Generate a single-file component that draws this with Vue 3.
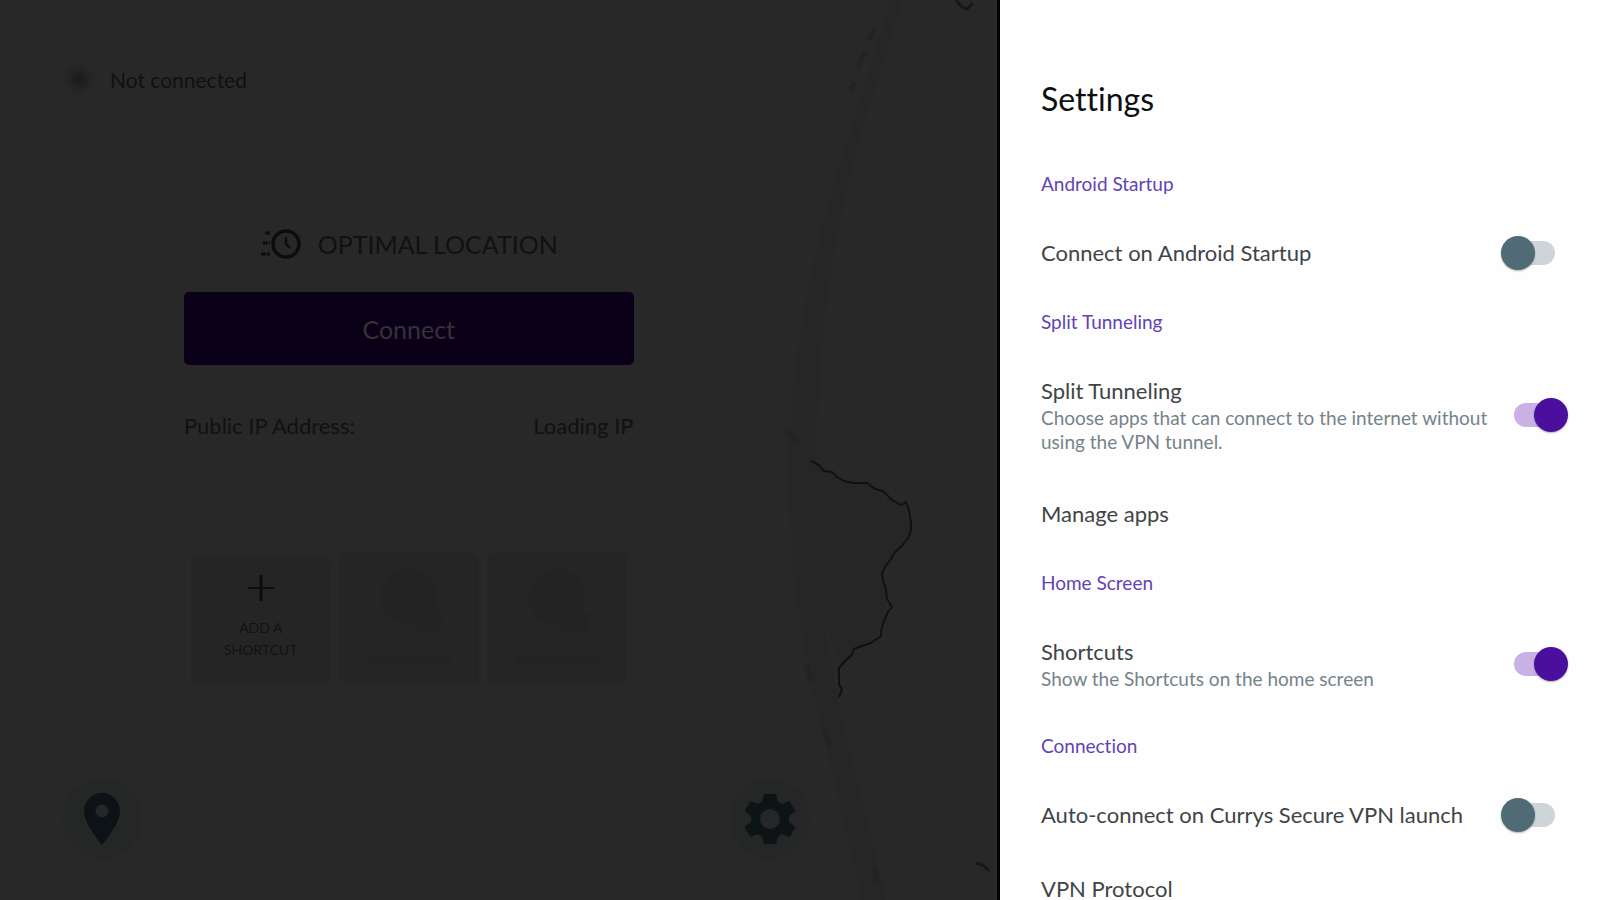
<script setup>
import { ref } from 'vue';

const sections = ref([
    {
        title: 'Android Startup',
        items: [{ id: 'startup', label: 'Connect on Android Startup', toggle: true, on: false }],
    },
    {
        title: 'Split Tunneling',
        items: [
            {
                id: 'split',
                label: 'Split Tunneling',
                text: 'Choose apps that can connect to the internet without using the VPN tunnel.',
                toggle: true,
                on: true,
            },
            { id: 'apps', label: 'Manage apps' },
        ],
    },
    {
        title: 'Home Screen',
        items: [
            {
                id: 'shortcuts',
                label: 'Shortcuts',
                text: 'Show the Shortcuts on the home screen',
                toggle: true,
                on: true,
            },
        ],
    },
    {
        title: 'Connection',
        items: [
            { id: 'auto', label: 'Auto-connect on Currys Secure VPN launch', toggle: true, on: false },
            { id: 'protocol', label: 'VPN Protocol' },
        ],
    },
]);
</script>

<template>
    <div class="screen">
        <main class="home">
            <svg class="map" viewBox="-2 0 237 900" fill="none" aria-hidden="true">
                <path class="coast" d="M128 0C105 90 72 170 50 270C34 350 22 440 30 550C38 660 70 760 100 900L124 900C98 790 66 690 56 560C50 450 56 330 76 230C92 140 120 70 140 0Z" />
                <path class="land" d="M50 462L80 480L104 484L124 500L142 504L148 530L138 548L120 568L124 600L118 634L92 650L80 668L58 610Z" />
                <path class="island" d="M113 28l-6 12M103 52l-7 16M93 82l-5 9M22 429l14 12M44 664l6 18M62 730l6 16M112 870l3 12" />
                <path class="border" d="M49 461l8 4 5 6 8 1 5 5 7 4 9 2 14 0 8 6 8 2 9 9 9 5 5-3 3 8 2 13 0 7-3 8-7 9-6 5-4 7-6 8-3 6 1 7 3 10 1 9 5 8-4 5-4 9-3 10 0 5-10 7-9 3-8 3-2 6-7 6-6 7 0 16 3 6-3 7" />
                <path class="border strong" d="M194 0l6 7 5 2 6-6M214 863l7 2 6 6" />
            </svg>

            <div class="content">
                <div class="status">
                    <span class="dot"></span>
                    <span>Not connected</span>
                </div>

                <div class="connect">
                    <h2 class="location">
                        <svg width="42" height="32" viewBox="0 0 42 32" fill="none" stroke="#0b0d0f" aria-hidden="true">
                            <circle cx="26" cy="16" r="13" stroke-width="3.6" />
                            <path d="M26 9v7l4 4" stroke-width="2.4" />
                            <path d="M5 5h6M3 15h7M1 26h9" stroke-width="3" stroke-dasharray="5 1" />
                        </svg>
                        <span>OPTIMAL LOCATION</span>
                    </h2>
                    <button class="connect-button">Connect</button>
                    <div class="ip">
                        <span>Public IP Address:</span>
                        <span>Loading IP</span>
                    </div>
                    <div class="tiles">
                        <button class="tile add">
                            <svg width="26" height="26" viewBox="0 0 26 26" stroke="#0b0d0d" aria-hidden="true">
                                <path d="M13 0v26" stroke-width="3" />
                                <path d="M0 13h26" stroke-width="2" />
                            </svg>
                            <span>ADD A SHORTCUT</span>
                        </button>
                        <div v-for="n in 2" :key="n" class="tile">
                            <svg width="66" height="66" viewBox="0 0 66 66" fill="#232323" aria-hidden="true">
                                <circle cx="33" cy="28" r="28" />
                                <rect x="37" y="42" width="29" height="20" rx="6" />
                            </svg>
                            <span class="line"></span>
                        </div>
                    </div>
                </div>

                <nav class="nav">
                    <button class="round" aria-label="Locations">
                        <svg width="36" height="52" viewBox="0 0 36 52" fill="#0c1215" aria-hidden="true">
                            <path fill-rule="evenodd" d="M18 0C8 0 0 8 0 18c0 13 18 34 18 34s18-21 18-34C36 8 28 0 18 0Zm0 11.500a6.500 6.500 0 1 1 0 13 6.500 6.500 0 0 1 0-13Z" />
                        </svg>
                    </button>
                    <button class="round" aria-label="Settings">
                        <svg width="52" height="52" viewBox="-26 -26 52 52" fill="#0d1416" aria-hidden="true">
                            <path fill-rule="evenodd" d="M-6-25H6L8-17.500L12-15L19.500-18L25.500-8L19-3V3L25.500 8L19.500 18L12 15L8 17.500L6 25H-6L-8 17.500L-12 15L-19.500 18L-25.500 8L-19 3V-3L-25.500-8L-19.500-18L-12-15L-8-17.500ZM0-10A10 10 0 1 0 0 10A10 10 0 1 0 0-10Z" />
                        </svg>
                    </button>
                </nav>
            </div>
        </main>

        <aside class="settings">
            <h1>Settings</h1>
            <section v-for="section in sections" :key="section.title">
                <h3>{{ section.title }}</h3>
                <template v-for="item in section.items" :key="item.id">
                    <label v-if="item.toggle" class="row" :for="item.id">
                        <span class="row-text">
                            <span class="row-label">{{ item.label }}</span>
                            <span v-if="item.text" class="row-note">{{ item.text }}</span>
                        </span>
                        <input :id="item.id" v-model="item.on" class="switch" type="checkbox" role="switch" />
                    </label>
                    <button v-else class="row">
                        <span class="row-label">{{ item.label }}</span>
                    </button>
                </template>
            </section>
        </aside>
    </div>
</template>

<style>
body {
    margin: 0;
    background-color: #282828;
}
</style>

<style scoped>
.screen {
    display: flex;
    height: 100vh;
    overflow: hidden;
    font-family: Lato, "Open Sans", sans-serif;
    font-variant-ligatures: none;
}

button {
    border: 0;
    padding: 0;
    background: none;
    font-family: inherit;
    cursor: pointer;
}

h1,
h2,
h3 {
    margin: 0;
    font-weight: 400;
}

.home {
    position: relative;
    flex: 1;
    box-sizing: border-box;
    background-color: #282828;
    border-right: 3px solid #000;
    color: #101111;
}

.map {
    position: absolute;
    top: 0;
    right: 0;
    height: 100%;
}

.coast {
    fill: #262626;
}

.land {
    fill: #262626;
}

.island {
    stroke: #232323;
    stroke-width: 5;
}

.border {
    stroke: #131010;
    stroke-width: 2;
    stroke-linejoin: round;
}

.strong {
    stroke: #161616;
    stroke-width: 3;
}

.content {
    position: relative;
    display: flex;
    flex-direction: column;
    box-sizing: border-box;
    width: 82%;
    height: 100%;
    padding: 62px 0 41px;
}

.status {
    display: flex;
    align-items: center;
    gap: 14px;
    height: 34px;
    padding-left: 62px;
    font-size: 21px;
}

.dot {
    width: 34px;
    height: 34px;
    border-radius: 50%;
    background: radial-gradient(circle, #1b1b1b 10%, #222 35%, #282828 70%);
}

.connect {
    width: 55%;
    margin: 132px auto 0;
}

.location {
    display: flex;
    justify-content: center;
    align-items: center;
    gap: 16px;
    height: 32px;
    font-size: 25px;
}

.connect-button {
    width: 100%;
    height: 73px;
    margin-top: 32px;
    border-radius: 5px;
    background-color: #0a0017;
    color: #353238;
    font-size: 25px;
}

.ip {
    display: flex;
    justify-content: space-between;
    margin-top: 47px;
    font-size: 22px;
    line-height: 28px;
}

.tiles {
    display: flex;
    justify-content: center;
    align-items: flex-end;
    gap: 8px;
    margin-top: 113px;
}

.tile {
    display: flex;
    flex-direction: column;
    align-items: center;
    box-sizing: border-box;
    width: 140px;
    height: 130px;
    padding: 16px 24px;
    border-radius: 6px;
    background-color: #252525;
}

.add {
    gap: 16px;
    height: 127px;
    padding-top: 19px;
    color: #111313;
    font-size: 14px;
    line-height: 22px;
}

.line {
    width: 84px;
    height: 8px;
    margin-top: 20px;
    background-color: #232323;
}

.nav {
    display: flex;
    justify-content: space-between;
    margin-top: auto;
    padding: 0 8px 0 62px;
}

.round {
    display: flex;
    justify-content: center;
    align-items: center;
    width: 80px;
    height: 80px;
    border-radius: 50%;
    background-color: #252626;
}

.settings {
    box-sizing: border-box;
    width: 37.5%;
    padding: 80px 32px 0 41px;
    background-color: #fefefe;
    overflow-y: auto;
    scrollbar-width: none;
}

h1 {
    margin-bottom: 31px;
    color: #0c0f10;
    font-size: 32px;
    line-height: 38px;
}

h3 {
    color: #6244b4;
    font-size: 19px;
    line-height: 69px;
}

.row {
    display: flex;
    justify-content: space-between;
    align-items: center;
    gap: 12px;
    width: 100%;
    padding: 20px 0;
    text-align: left;
}

.row + .row {
    margin-top: 5px;
}

.row-label {
    display: block;
    color: #3f4547;
    font-size: 22px;
    line-height: 29px;
}

.row-note {
    display: block;
    padding-top: 1px;
    color: #75838a;
    font-size: 19px;
    line-height: 24px;
}

.switch {
    display: grid;
    flex: none;
    align-items: center;
    appearance: none;
    width: 67px;
    height: 34px;
    margin: -3px 0;
    cursor: pointer;
}

.switch::before,
.switch::after {
    content: "";
    grid-area: 1 / 1;
}

.switch::before {
    justify-self: center;
    width: 41px;
    height: 24px;
    border-radius: 12px;
    background-color: #cdd5d8;
}

.switch::after {
    width: 34px;
    height: 34px;
    border-radius: 50%;
    background-color: #506b76;
    box-shadow: 0 1px 2px rgba(0, 0, 0, .3);
}

.switch:checked::before {
    background-color: #c8b2e5;
}

.switch:checked::after {
    justify-self: end;
    background-color: #4b0f9e;
}
</style>
